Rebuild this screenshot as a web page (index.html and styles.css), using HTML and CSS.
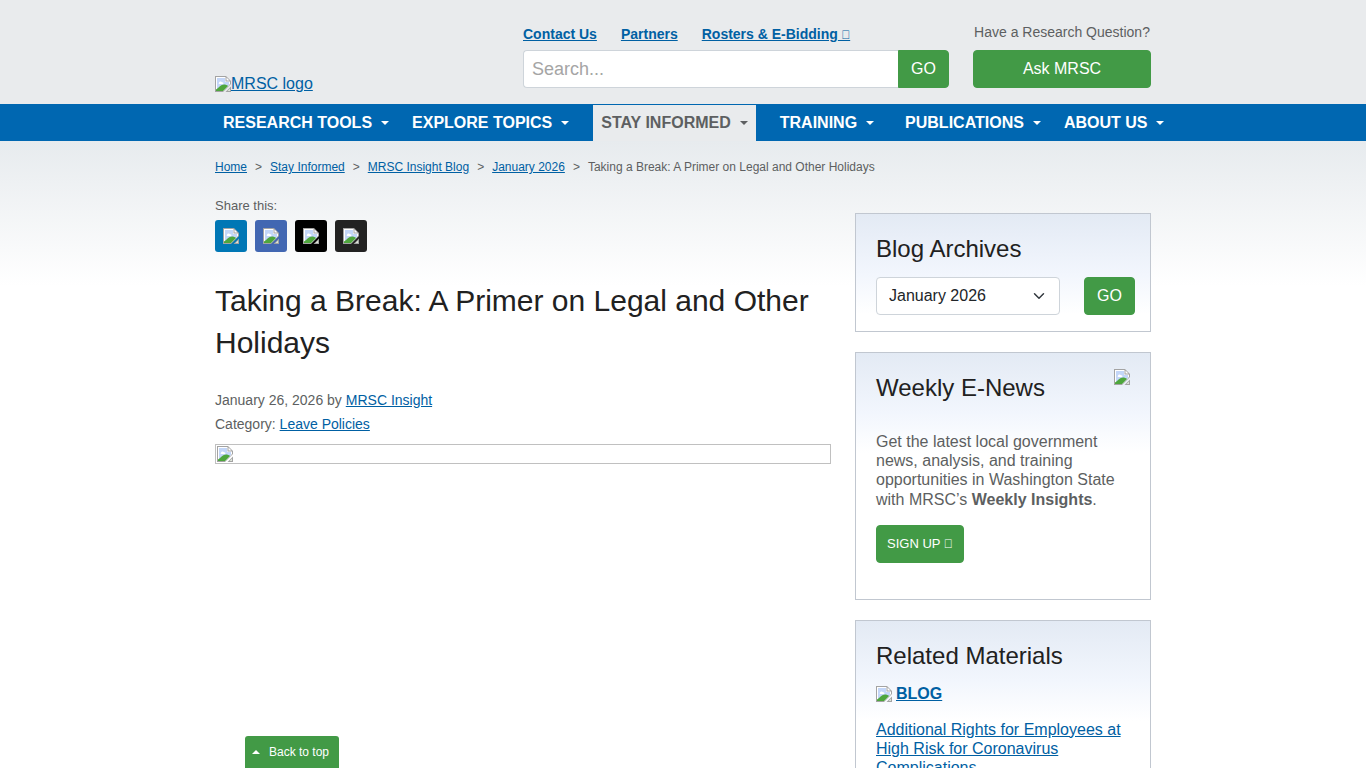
FILE: index.html
```
<!DOCTYPE html>
<html lang="en">
<head>
    <meta charset="UTF-8">
    <meta name="viewport" content="width=device-width, initial-scale=1.0">
    <title>Taking a Break: A Primer on Legal and Other Holidays - MRSC</title>
    <link rel="stylesheet" href="styles.css">
</head>
<body>
    <!-- Shared image placeholder icon -->
    <svg class="sprite" aria-hidden="true">
        <symbol id="image-icon" viewBox="0 0 16 16">
            <path d="M0 0H11L16 5V8L8 16H0Z" fill="#a3a3a3"/>
            <path d="M1 1H10.500V5.500H15V8L8 15H1Z" fill="#fff"/>
            <path d="M2 2H10V6H14V9L8 14H2Z" fill="#c3d6f8"/>
            <path d="M11.500 1.500V4.500H14.500Z" fill="#fff"/>
            <path d="M4 7C4 5.500 6 5 7 6.200C8.500 6 9 7.500 8 8H4.500C3.500 8 3.300 7.200 4 7Z" fill="#fff"/>
            <path d="M1 15V13.500C4 11.500 6 8.500 9 8.500C10.500 8.500 12 9 13 10L8 15Z" fill="#4ea63d"/>
            <path d="M10.500 16L16 10.500V16Z" fill="#a3a3a3"/>
            <path d="M12.500 15L15 12.500V15Z" fill="#dfe6da"/>
        </symbol>
    </svg>

    <header class="header">
        <div class="container header-row">
            <a href="#" class="logo"><svg class="img-icon"><use href="#image-icon"/></svg>MRSC logo</a>
            <div class="header-search">
                <div class="top-links">
                    <a href="#">Contact Us</a>
                    <a href="#">Partners</a>
                    <a href="#" class="external">Rosters &amp; E-Bidding</a>
                </div>
                <form class="search-form">
                    <input type="text" placeholder="Search..." aria-label="Search">
                    <button type="submit" class="btn">GO</button>
                </form>
            </div>
            <div class="header-ask">
                <span>Have a Research Question?</span>
                <a href="#" class="btn">Ask MRSC</a>
            </div>
        </div>
    </header>

    <nav class="navbar">
        <ul class="container nav-list">
            <li><a href="#">RESEARCH TOOLS</a></li>
            <li><a href="#">EXPLORE TOPICS</a></li>
            <li class="spaced"><a href="#" class="active">STAY INFORMED</a></li>
            <li class="spaced-end"><a href="#">TRAINING</a></li>
            <li><a href="#">PUBLICATIONS</a></li>
            <li><a href="#">ABOUT US</a></li>
        </ul>
    </nav>

    <div class="page">
        <div class="container">
            <ol class="breadcrumb">
                <li><a href="#">Home</a></li>
                <li><a href="#">Stay Informed</a></li>
                <li><a href="#">MRSC Insight Blog</a></li>
                <li><a href="#">January 2026</a></li>
                <li>Taking a Break: A Primer on Legal and Other Holidays</li>
            </ol>

            <div class="columns">
                <main>
                    <div class="share-label">Share this:</div>
                    <div class="share">
                        <a href="#" class="linkedin" aria-label="LinkedIn"><svg class="img-icon"><use href="#image-icon"/></svg></a>
                        <a href="#" class="facebook" aria-label="Facebook"><svg class="img-icon"><use href="#image-icon"/></svg></a>
                        <a href="#" class="twitter" aria-label="X"><svg class="img-icon"><use href="#image-icon"/></svg></a>
                        <a href="#" class="email" aria-label="Email"><svg class="img-icon"><use href="#image-icon"/></svg></a>
                    </div>
                    <h1>Taking a Break: A Primer on Legal and Other Holidays</h1>
                    <div class="meta">January 26, 2026 by <a href="#">MRSC Insight</a></div>
                    <div class="meta">Category: <a href="#">Leave Policies</a></div>
                    <div class="post-image"><svg class="img-icon"><use href="#image-icon"/></svg></div>
                </main>

                <aside>
                    <section class="card">
                        <h2>Blog Archives</h2>
                        <form class="archive-form">
                            <select aria-label="Archive month">
                                <option>January 2026</option>
                                <option>December 2025</option>
                            </select>
                            <button type="submit" class="btn">GO</button>
                        </form>
                    </section>

                    <section class="card news">
                        <div class="news-head">
                            <h2>Weekly E-News</h2>
                            <svg class="img-icon"><use href="#image-icon"/></svg>
                        </div>
                        <p>Get the latest local government news, analysis, and training opportunities in Washington State with MRSC’s <strong>Weekly Insights</strong>.</p>
                        <a href="#" class="btn signup external">SIGN UP</a>
                    </section>

                    <section class="card">
                        <h2>Related Materials</h2>
                        <div class="material-type"><svg class="img-icon"><use href="#image-icon"/></svg><a href="#">BLOG</a></div>
                        <p><a href="#">Additional Rights for Employees at High Risk for Coronavirus Complications</a></p>
                    </section>
                </aside>
            </div>
        </div>
    </div>

    <a href="#" class="back-to-top">Back to top</a>
</body>
</html>
```
FILE: styles.css
```
* {
    box-sizing: border-box;
}
html {
    scrollbar-width: none;
}
body {
    margin: 0;
    font-family: "Liberation Sans", Arial, sans-serif;
    font-size: 16px;
    line-height: 24px;
    color: #5d5f61;
    background-color: #fff;
}
a {
    color: #0060a3;
}
.sprite {
    display: none;
}
.img-icon {
    width: 16px;
    height: 16px;
    flex: none;
}
.container {
    max-width: 960px;
    margin: 0 auto;
    padding: 0 12px;
}
.btn {
    display: block;
    height: 38px;
    padding: 6px 12px;
    border: 1px solid #429a46;
    border-radius: 4px;
    background-color: #429a46;
    color: #fff;
    font-family: inherit;
    font-size: 16px;
    line-height: 24px;
    text-align: center;
    text-decoration: none;
}
.external::after {
    content: " \f35d";
    font-size: 12px;
    line-height: 1;
}

/* Header */
.header {
    background-color: #e9ebed;
}
.header-row {
    display: grid;
    grid-template-columns: 1fr 426px 178px;
    column-gap: 24px;
    align-items: end;
    padding-top: 20px;
    padding-bottom: 16px;
}
.logo {
    display: flex;
    align-items: center;
    margin-bottom: -8px;
}
.top-links {
    display: flex;
    gap: 24px;
    padding: 2px 0 4px;
    font-size: 14px;
    font-weight: bold;
}
.search-form {
    display: flex;
}
.search-form input {
    flex: 1;
    min-width: 0;
    height: 38px;
    padding: 6px 8px;
    border: 1px solid #ced4da;
    border-right: 0;
    border-radius: 4px 0 0 4px;
    font-family: inherit;
    font-size: 18px;
}
.search-form input::placeholder {
    color: #a5a5a5;
}
.search-form .btn {
    border-radius: 0 4px 4px 0;
}
.header-ask span {
    display: block;
    padding-bottom: 6px;
    font-size: 14px;
    text-align: center;
}

/* Main menu */
.navbar {
    background-color: #0067b1;
    padding-top: 1px;
}
.nav-list {
    display: flex;
    gap: 7px;
    list-style: none;
}
.nav-list a {
    display: flex;
    align-items: center;
    height: 36px;
    padding: 0 8px;
    color: #fff;
    font-weight: bold;
    text-decoration: none;
    white-space: nowrap;
}
.nav-list a::after {
    content: "";
    margin-left: 9px;
    border-top: 4px solid;
    border-left: 4px solid transparent;
    border-right: 4px solid transparent;
}
.nav-list a.active {
    background-color: #e9ebed;
    color: #5d5f61;
}
.spaced {
    margin: 0 9px;
}
.spaced-end {
    margin-right: 8px;
}

/* Page */
.page {
    background: linear-gradient(#e7ebee, #fff 145px);
}
.breadcrumb {
    display: flex;
    margin: 0;
    padding: 14px 0 0;
    list-style: none;
    font-size: 12px;
}
.breadcrumb li + li::before {
    content: ">";
    padding: 0 8px;
}
.columns {
    display: grid;
    grid-template-columns: 1fr 296px;
    column-gap: 24px;
}
.share-label {
    padding-top: 15px;
    font-size: 13px;
}
.share {
    display: flex;
    gap: 8px;
    padding-top: 2px;
}
.share a {
    display: flex;
    align-items: center;
    justify-content: center;
    width: 32px;
    height: 32px;
    border-radius: 3px;
}
.linkedin {
    background-color: #0077b5;
}
.facebook {
    background-color: #4267b2;
}
.twitter {
    background-color: #000;
}
.email {
    background-color: #222;
}
h1 {
    margin: 28px 0 24px;
    color: #212121;
    font-size: 30px;
    font-weight: normal;
    line-height: 42px;
}
h2 {
    margin: 0;
    color: #212121;
    font-size: 24px;
    font-weight: normal;
    line-height: 30px;
}
.meta {
    font-size: 14px;
}
.post-image {
    display: flex;
    height: 20px;
    margin-top: 8px;
    padding: 1px;
    border: 1px solid #c0c0c0;
}

/* Sidebar */
aside {
    padding-top: 34px;
}
.card {
    margin-bottom: 20px;
    padding: 20px 20px 16px;
    border: 1px solid #c1c7d0;
    background: linear-gradient(#e3eaf4, #f2f6fd 60px, #fff 100px);
}
.card p {
    margin: 0;
    line-height: 1.2;
}
.archive-form {
    display: flex;
    justify-content: space-between;
    margin: 13px -5px 0 0;
}
.archive-form select {
    width: 184px;
    height: 38px;
    padding: 0 12px 2px;
    border: 1px solid #ced4da;
    border-radius: 4px;
    appearance: none;
    background: #fff url("data:image/svg+xml,%3Csvg xmlns='http://www.w3.org/2000/svg' viewBox='0 0 16 16'%3E%3Cpath fill='none' stroke='%23343a40' stroke-linecap='round' stroke-linejoin='round' stroke-width='2' d='m2 5 6 6 6-6'/%3E%3C/svg%3E") no-repeat right 14px center / 12px 12px;
    color: #212529;
    font-family: inherit;
    font-size: 16px;
}
.news {
    padding-bottom: 36px;
}
.news-head {
    display: flex;
    justify-content: space-between;
    margin-bottom: 29px;
}
.news-head .img-icon {
    margin-top: -4px;
}
.signup {
    display: inline-block;
    margin-top: 16px;
    padding: 6px 10px;
    font-size: 13px;
    vertical-align: top;
}
.material-type {
    display: flex;
    align-items: center;
    gap: 4px;
    margin: 11px 0 14px;
    font-weight: bold;
}
.back-to-top {
    position: fixed;
    bottom: 0;
    left: 245px;
    display: flex;
    align-items: center;
    gap: 9px;
    height: 32px;
    padding: 0 10px 0 7px;
    border-radius: 3px 3px 0 0;
    background-color: #429a46;
    color: #fff;
    font-size: 12px;
    text-decoration: none;
}
.back-to-top::before {
    content: "";
    border-bottom: 4px solid;
    border-left: 4px solid transparent;
    border-right: 4px solid transparent;
}
```
